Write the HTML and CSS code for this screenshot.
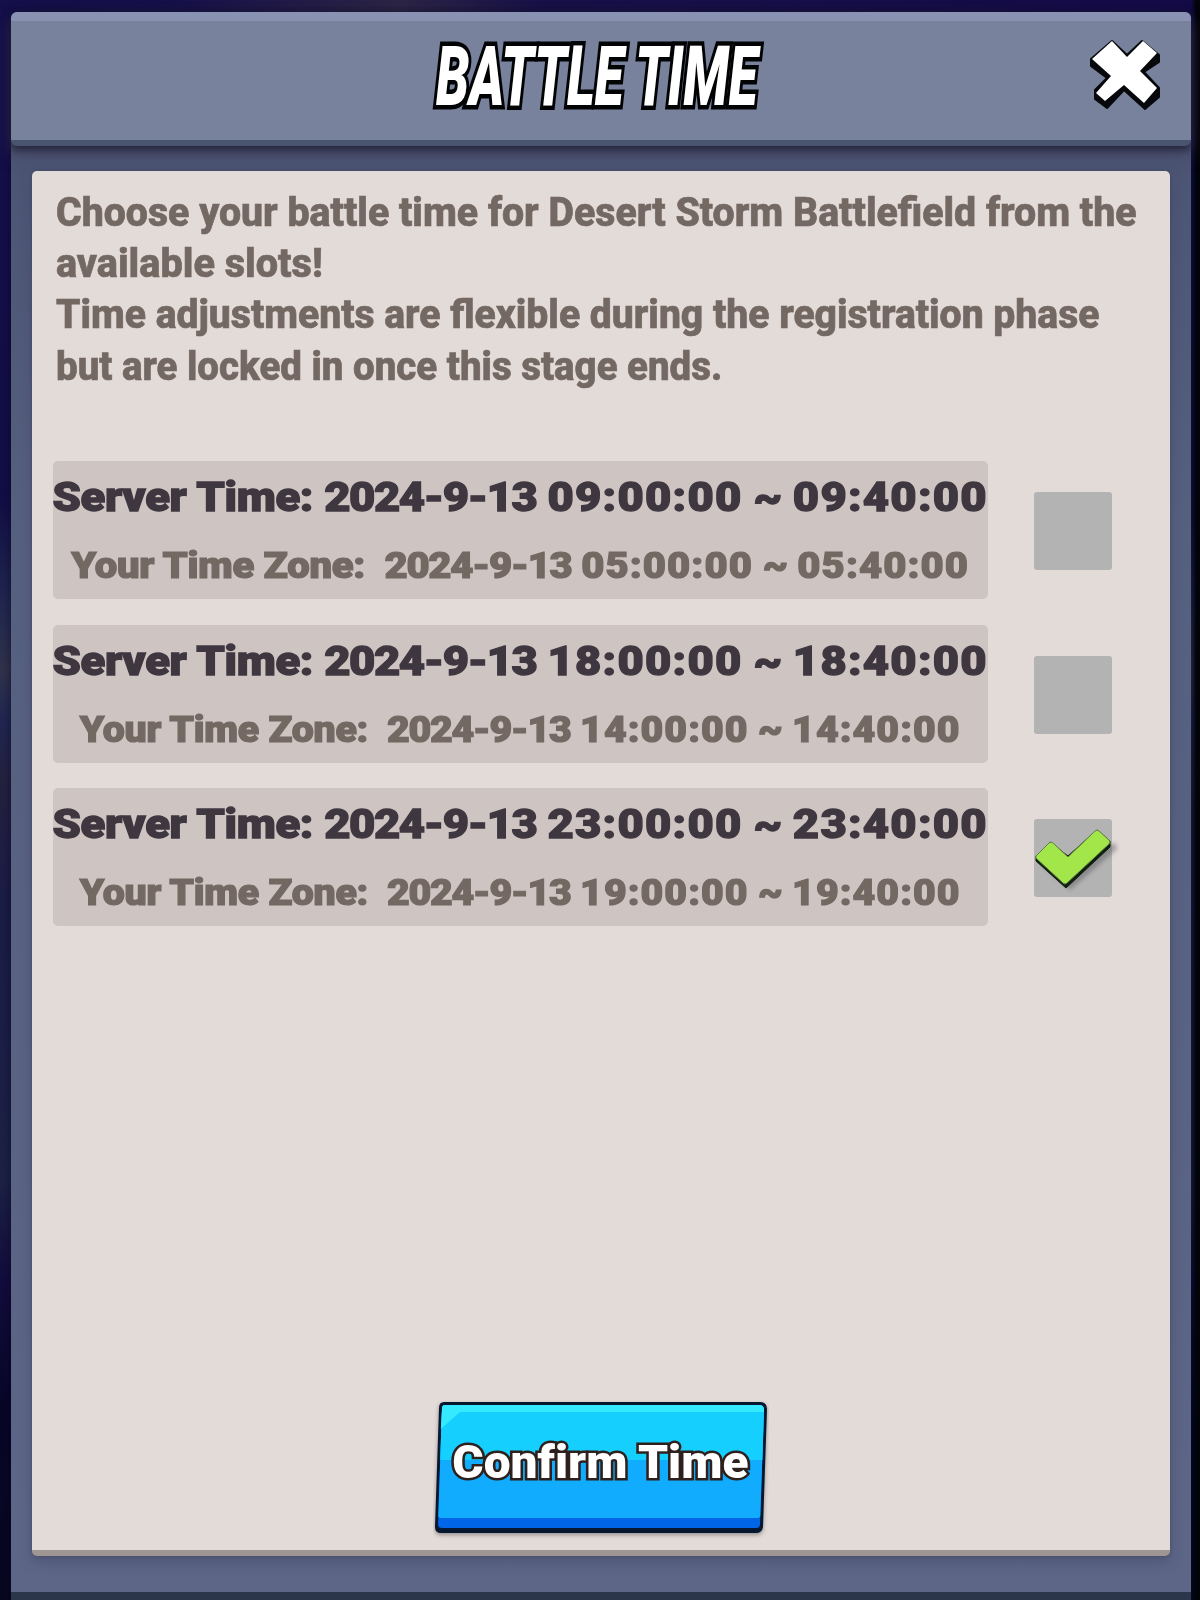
FILE: index.html
```html
<!DOCTYPE html>
<html lang="en">
<head>
<meta charset="utf-8">
<title>Battle Time</title>
<link rel="stylesheet" href="styles.css">
</head>
<body>
<main class="dialog">
  <header class="header">
    <h1 class="title"><span class="fit">BATTLE TIME</span></h1>
    <button class="close" aria-label="Close">
      <svg width="72" height="72" viewBox="0 0 72 72">
        <path d="M22 2 37 16 52 2 69 16V23L54 33 69 49V58L55 70 34 51 17 69 5 60V51L17 39 1 27V20Z" fill="#07080b" stroke="#07080b" stroke-width="2" stroke-linejoin="round"/>
        <path d="M22 2 37 18 53 2 67 14 50 32 67 49 54 64 34 46 15 62 6 54 21 37 2 20Z" fill="#fff"/>
      </svg>
    </button>
  </header>
  <section class="panel">
    <p class="intro">
      <span class="fit" style="--sx:.957">Choose your battle time for Desert Storm Battlefield from the</span>
      <span class="fit" style="--sx:.966">available slots!</span>
      <span class="fit" style="--sx:.953">Time adjustments are flexible during the registration phase</span>
      <span class="fit" style="--sx:.938">but are locked in once this stage ends.</span>
    </p>
    <ul class="slots">
      <li class="slot">
        <div class="card">
          <div class="server"><span class="fit" style="--sx:1.121">Server Time: <span class="date">2024-9-13</span> <span class="hours">09:00:00</span> ~ <span class="hours">09:40:00</span></span></div>
          <div class="local"><span class="fit" style="--sx:1.111">Your Time Zone:  <span class="date">2024-9-13</span> <span class="hours">05:00:00</span> ~ <span class="hours">05:40:00</span></span></div>
        </div>
        <div class="check"></div>
      </li>
      <li class="slot">
        <div class="card">
          <div class="server"><span class="fit" style="--sx:1.121">Server Time: <span class="date">2024-9-13</span> <span class="hours">18:00:00</span> ~ <span class="hours">18:40:00</span></span></div>
          <div class="local"><span class="fit" style="--sx:1.09">Your Time Zone:  <span class="date">2024-9-13</span> <span class="hours">14:00:00</span> ~ <span class="hours">14:40:00</span></span></div>
        </div>
        <div class="check"></div>
      </li>
      <li class="slot">
        <div class="card">
          <div class="server"><span class="fit" style="--sx:1.121">Server Time: <span class="date">2024-9-13</span> <span class="hours">23:00:00</span> ~ <span class="hours">23:40:00</span></span></div>
          <div class="local"><span class="fit" style="--sx:1.09">Your Time Zone:  <span class="date">2024-9-13</span> <span class="hours">19:00:00</span> ~ <span class="hours">19:40:00</span></span></div>
        </div>
        <div class="check">
          <svg width="86" height="78" viewBox="0 0 86 78">
            <path d="M8 46 36 71 83 30 81 24 60 30Z" fill="#55555a" opacity=".45" class="soft"/>
            <path d="M2 37 16 23 34 37 63 11 76 22V28L32 69 2 42Z" fill="#10200c" stroke="#10200c" stroke-linejoin="round"/>
            <path d="M2 37 15 24Q17 22 19 24L34 38 61 12Q63 10 65 12L75 21Q77 23 75 25L33 64Q31 66 29 64L3 40Q1 38 2 37Z" fill="#a3e64a" stroke="#5f7f45"/>
          </svg>
        </div>
      </li>
    </ul>
    <button class="confirm">
      <svg width="336" height="140" viewBox="0 0 336 140">
        <path d="M10 4H328Q334 4 334 10L330 129Q329 135 323 135H8Q2 135 2 129L6 9Q6 4 10 4Z" fill="#4c4543" opacity=".5" class="soft"/>
        <path d="M11 2H327Q334 2 334 9L330 127Q329 133 323 133H8Q2 133 2 127L6 8Q6 2 11 2Z" fill="#061730"/>
        <path d="M12 5H326Q331 5 331 10L327 124Q327 128 323 128H9Q5 128 5 124L9 9Q9 5 12 5Z" fill="#0065e6"/>
        <path d="M12 5H326Q331 5 331 10L327.300 116Q327 118 323 118H9Q5.300 118 5.300 116L9 9Q9 5 12 5Z" fill="#12acff"/>
        <path d="M12 5H326Q331 5 331 10L329.400 60H7.200L9 9Q9 5 12 5Z" fill="#15cfff"/>
        <path d="M12 5H326Q331 5 331 10V12H27L7.800 29 9 9Q9 5 12 5Z" fill="#35eaff"/>
      </svg>
      <span class="fit">Confirm Time</span>
    </button>
  </section>
</main>
</body>
</html>
```
FILE: styles.css
```css
* { box-sizing: border-box; }

body {
  margin: 0;
  height: 1600px;
  overflow: hidden;
  padding: 12px 9px 0 11px;
  font-family: Roboto, sans-serif;
  background:
    linear-gradient(90deg, transparent 1191px, #03050b 1196px),
    linear-gradient(90deg, #150f4a 0, #17114a 180px, #2c2545 400px, #181148 540px, #140b48 100%) 0 0 / 100% 13px no-repeat,
    linear-gradient(#150f4a 0, #120e45 500px, #20264e 600px, #30324a 670px, #202650 720px, #24213f 780px, #1b1c46 900px, #1c2145 1180px, #120c3c 1280px, #080628 1400px, #080720 100%);
}

.dialog {
  display: flex;
  flex-direction: column;
  height: 1588px;
  border-bottom: 8px solid #2b364b;
  border-radius: 6px 6px 0 0;
  background: linear-gradient(#4b5473 130px, #555f7e 500px, #5d6687 100%);
  box-shadow: 0 0 8px rgba(5, 5, 30, .6);
}

.header {
  display: grid;
  grid-template-columns: 1fr 328px 1fr;
  flex: none;
  height: 134px;
  border-top: 9px solid #8992b2;
  border-bottom: 6px solid #49546e;
  border-radius: 6px;
  background: #78829d;
  box-shadow: 0 4px 8px rgba(30, 32, 52, .9), 0 8px 18px rgba(70, 60, 90, .5);
}

.title {
  grid-column: 2;
  display: flex;
  justify-content: center;
  margin: 0 8px 0 0;
  font: italic 900 83px/112px Roboto, sans-serif;
  color: #fff;
}

.title .fit {
  transform: scaleX(.641);
  -webkit-text-stroke: 9px #020304;
  paint-order: stroke fill;
  text-shadow: 2px 4px 0 #020304;
}

.close {
  justify-self: end;
  width: 72px;
  height: 72px;
  margin: 18px 29px 0 0;
  padding: 0;
  border: 0;
  background: none;
}

.close svg,
.confirm svg,
.check svg { display: block; }

.panel {
  display: flex;
  flex-direction: column;
  flex: none;
  width: 1138px;
  height: 1385px;
  margin: 25px 0 0 20.500px;
  padding: 16px 21px 10px;
  border-bottom: 6px solid #9f9693;
  border-radius: 5px;
  background: #e3dbd8;
  box-shadow: 0 6px 12px rgba(65, 70, 100, .5), 0 0 3px rgba(65, 70, 100, .7);
}

.fit {
  flex: none;
  white-space: pre;
  transform: scaleX(var(--sx, 1));
}

.intro {
  margin: 0 0 69px 3px;
  font-weight: 800;
  font-size: 41px;
  line-height: 51.2px;
  color: #746863;
  -webkit-text-stroke: .7px #746863;
}

.intro .fit {
  display: block;
  width: max-content;
  transform-origin: left;
}

.slots {
  display: grid;
  gap: 25.700px;
  margin: 0;
  padding: 0;
  list-style: none;
}

.slot {
  display: flex;
  align-items: center;
  gap: 46px;
}

.card {
  width: 935px;
  height: 138px;
  border-radius: 5px;
  background: #cec5c2;
}

.server,
.local {
  display: flex;
  justify-content: center;
  font-weight: 900;
  letter-spacing: -.007em;
}

.date { letter-spacing: -.031em; }

.hours { letter-spacing: .027em; }

.server {
  font-size: 40.5px;
  line-height: 72px;
  color: #3f3740;
  -webkit-text-stroke: 1.3px #3f3740;
}

.local {
  font-size: 36px;
  line-height: 67px;
  color: #746863;
  -webkit-text-stroke: 1.2px #746863;
}

.check {
  width: 78px;
  height: 78px;
  margin-top: 2px;
  border-radius: 3px;
  background: #b3b3b3;
}

.check svg { overflow: visible; }

.soft { filter: blur(2px); }

.confirm {
  display: grid;
  place-items: start center;
  align-self: center;
  width: 336px;
  height: 140px;
  margin: auto 0 0;
  padding: 0;
  border: 0;
  background: none;
  font: 900 46px/124px Roboto, sans-serif;
  color: #fff;
}

.confirm > * { grid-area: 1 / 1; }

.confirm .fit {
  --sx: 1.04;
  font-variant-ligatures: none;
  -webkit-text-stroke: 5px #2e201c;
  paint-order: stroke fill;
}
```
